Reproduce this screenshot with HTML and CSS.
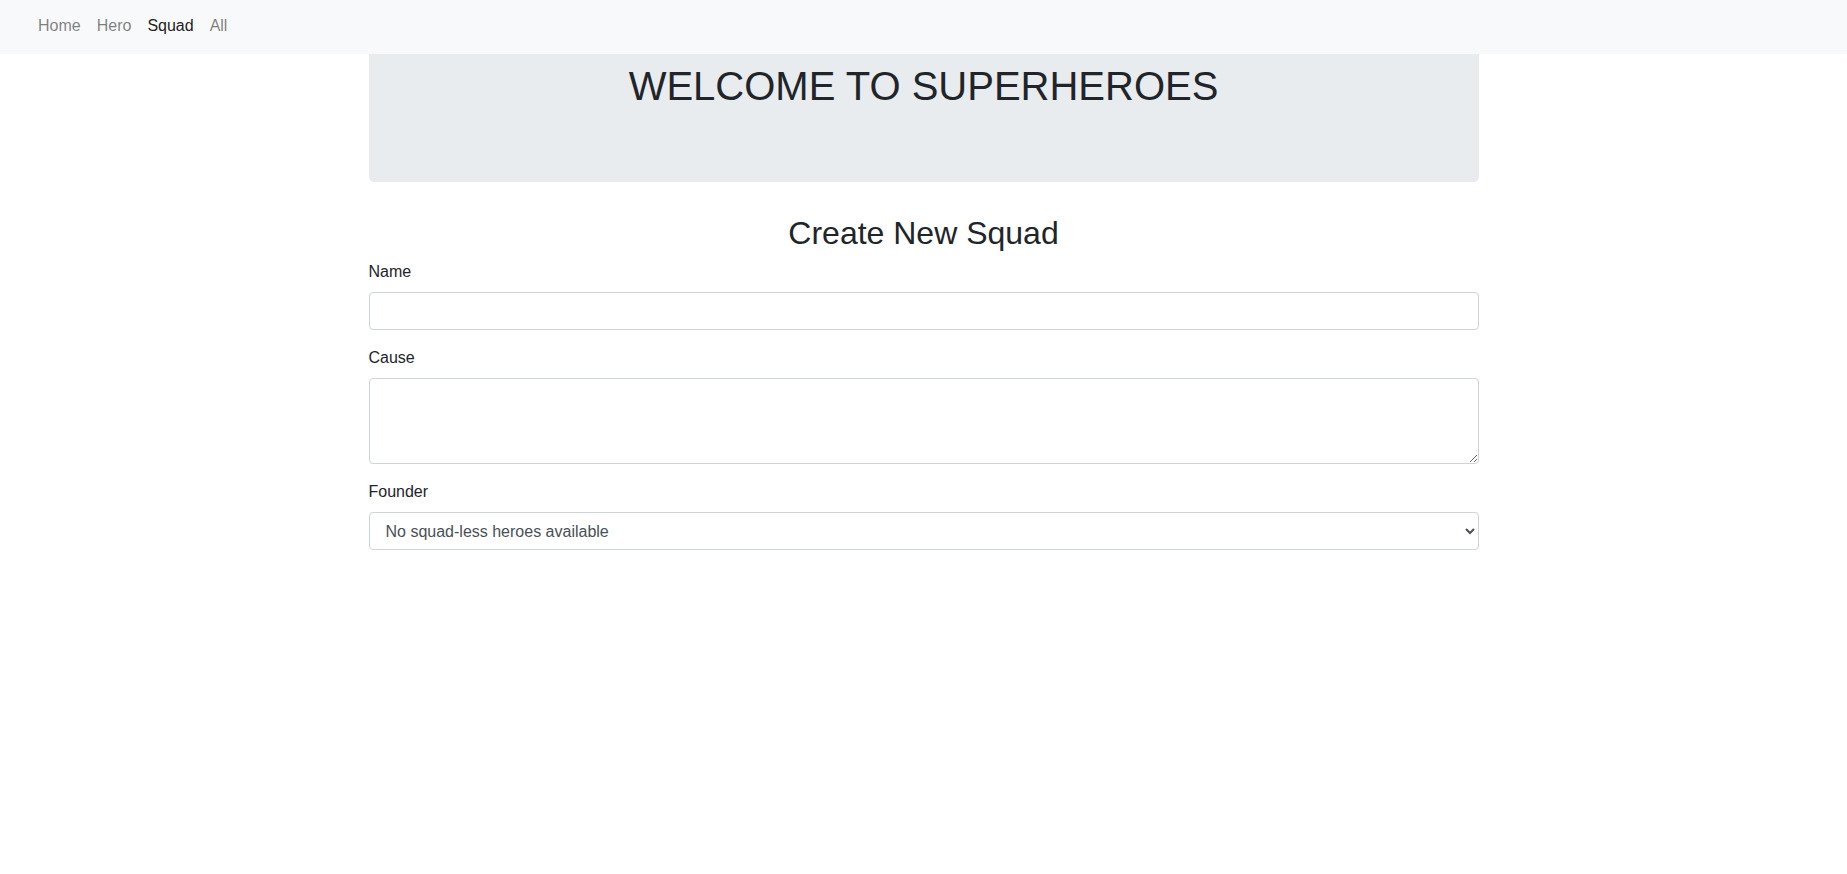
FILE: index.html
```html
<!DOCTYPE html>
<html lang="en">
<head>
<meta charset="utf-8">
<title>Superheroes</title>
<link rel="stylesheet" href="styles.css">
</head>
<body>
<nav class="navbar">
  <ul class="nav-list">
    <li><a class="nav-link" href="#">Home</a></li>
    <li><a class="nav-link" href="#">Hero</a></li>
    <li><a class="nav-link active" href="#">Squad</a></li>
    <li><a class="nav-link" href="#">All</a></li>
  </ul>
</nav>
<main class="container">
  <header class="jumbotron">
    <h1>WELCOME TO SUPERHEROES</h1>
  </header>
  <h2>Create New Squad</h2>
  <form>
    <div class="form-group">
      <label for="name">Name</label>
      <input class="form-control" type="text" id="name">
    </div>
    <div class="form-group">
      <label for="cause">Cause</label>
      <textarea class="form-control" id="cause" rows="3"></textarea>
    </div>
    <div class="form-group">
      <label for="founder">Founder</label>
      <select class="form-control" id="founder">
        <option>No squad-less heroes available</option>
      </select>
    </div>
  </form>
</main>
</body>
</html>
```
FILE: styles.css
```css
*, *::before, *::after {
  box-sizing: border-box;
}

body {
  margin: 0;
  background: #fff;
  color: #212529;
  font: 400 16px/24px "Liberation Sans", Arial, sans-serif;
}

.navbar {
  padding: 6px 30px 8px;
  background: #f8f9fa;
}

.nav-list {
  display: flex;
  margin: 0;
  padding: 0;
  list-style: none;
}

.nav-link {
  display: block;
  padding: 8px;
  color: rgba(0, 0, 0, 0.5);
  text-decoration: none;
}

.nav-link.active {
  color: rgba(0, 0, 0, 0.9);
}

.container {
  max-width: 1140px;
  margin: 0 auto;
  padding: 0 15px;
}

.jumbotron {
  margin-bottom: 32px;
  padding: 8px 32px 64px;
  border-radius: 0 0 5px 5px;
  background: #e9ecef;
}

h1, h2 {
  margin: 0 0 8px;
  font-weight: 500;
  text-align: center;
}

h1 {
  font-size: 40px;
  line-height: 48px;
}

h2 {
  font-size: 32px;
  line-height: 38px;
}

.form-group {
  margin-bottom: 16px;
}

label {
  display: inline-block;
  margin-bottom: 8px;
}

.form-control {
  display: block;
  width: 100%;
  height: 38px;
  padding: 6px 12px;
  border: 1px solid #ced4da;
  border-radius: 4px;
  background: #fff;
  color: #495057;
  font: inherit;
}

textarea.form-control {
  height: auto;
  overflow: auto;
  resize: vertical;
}
```
